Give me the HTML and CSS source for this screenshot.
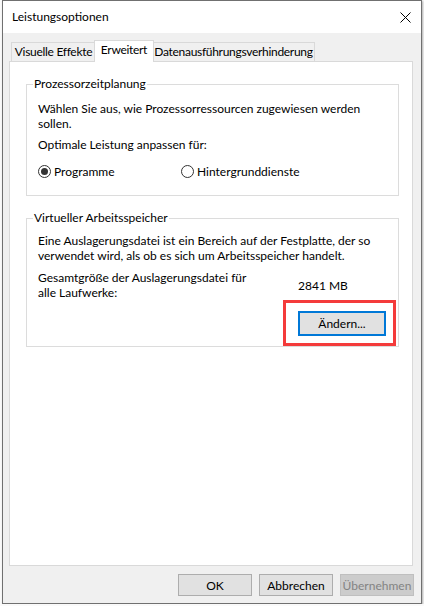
FILE: index.html
```html
<!DOCTYPE html>
<html lang="de">
<head>
  <meta charset="UTF-8">
  <meta name="viewport" content="width=device-width, initial-scale=1.0">
  <title>Leistungsoptionen</title>
  <link rel="stylesheet" href="styles.css">
</head>
<body>
  <div class="window">
    <div class="titlebar">
      <span class="title">Leistungsoptionen</span>
      <span class="close">
        <svg width="11" height="11" viewBox="0 0 11 11">
          <path d="M0.5 0.5 L10.5 10.5 M10.5 0.5 L0.5 10.5" stroke="#000" stroke-width="1" fill="none"/>
        </svg>
      </span>
    </div>
    <div class="client">
      <div class="tabs">
        <div class="tab tab-visual">Visuelle Effekte</div>
        <div class="tab tab-active">Erweitert</div>
        <div class="tab tab-dep">Datenausführungsverhinderung</div>
      </div>
      <div class="panel">
        <fieldset class="group group-cpu">
          <legend>Prozessorzeitplanung</legend>
          <div class="group-body">
            <p class="text">Wählen Sie aus, wie Prozessorressourcen zugewiesen werden sollen.</p>
            <p class="text text-gap">Optimale Leistung anpassen für:</p>
            <div class="radios">
              <span class="radio radio-first"><span class="radio-mark checked"></span>Programme</span>
              <span class="radio"><span class="radio-mark"></span>Hintergrunddienste</span>
            </div>
          </div>
        </fieldset>
        <fieldset class="group group-mem">
          <legend>Virtueller Arbeitsspeicher</legend>
          <div class="group-body">
            <p class="text">Eine Auslagerungsdatei ist ein Bereich auf der Festplatte, der so verwendet wird, als ob es sich um Arbeitsspeicher handelt.</p>
            <div class="size-row">
              <span class="size-label">Gesamtgröße der Auslagerungsdatei für alle Laufwerke:</span>
              <span class="size-value">2841 MB</span>
            </div>
            <div class="change-row">
              <div class="highlight">
                <button class="btn btn-focus">Ändern...</button>
              </div>
            </div>
          </div>
        </fieldset>
      </div>
      <div class="footer">
        <button class="btn">OK</button>
        <button class="btn">Abbrechen</button>
        <button class="btn btn-disabled">Übernehmen</button>
      </div>
    </div>
  </div>
</body>
</html>
```

FILE: styles.css
```css
* {
  box-sizing: border-box;
}
body {
  margin: 0;
  background-color: #fafafa;
  font-family: Lato, "Noto Sans", sans-serif;
  font-size: 12px;
  color: #000;
}
.window {
  width: 420px;
  height: 604px;
  margin-left: 2px;
  border: 1px solid #707070;
  box-shadow: 1px 1px 2px rgba(0, 0, 0, 0.3);
  background-color: #f0f0f0;
  display: flex;
  flex-direction: column;
}
.titlebar {
  height: 32px;
  background-color: #fff;
  display: flex;
  align-items: center;
  justify-content: space-between;
  padding: 0 10px 0 9px;
}
.title {
  line-height: 16px;
}
.close {
  display: flex;
  margin-top: 1px;
}
.client {
  flex: 1;
  display: flex;
  flex-direction: column;
  padding: 7px 8px 7px 6px;
}
.tabs {
  display: flex;
  align-items: flex-end;
  height: 21px;
  padding-left: 2px;
}
.tab {
  height: 19px;
  border: 1px solid #d9d9d9;
  border-bottom: 0;
  background-color: #f0f0f0;
  text-align: center;
  line-height: 17px;
  white-space: nowrap;
  letter-spacing: -0.3px;
}
.tab-visual {
  width: 85px;
}
.tab-active {
  width: 60px;
  height: 22px;
  margin: 0 -2px -1px;
  background-color: #fff;
  position: relative;
  z-index: 1;
}
.tab-dep {
  width: 163px;
}
.panel {
  height: 505px;
  flex: none;
  border: 1px solid #d9d9d9;
  background-color: #fff;
  padding: 14px 13px 0 16px;
}
.group {
  margin: 0;
  padding: 0;
  min-width: 0;
  border: 1px solid #dcdcdc;
}
.group legend {
  margin-left: 6px;
  padding: 0 1px;
  line-height: 16px;
}
.group-mem {
  margin-top: 14px;
}
.group-body {
  padding: 7px 11px 0 11px;
}
.group-cpu .group-body {
  padding-top: 9px;
  padding-bottom: 16px;
}
.text {
  margin: 0;
  line-height: 15px;
}
.text-gap {
  margin-top: 6px;
}
.radios {
  display: flex;
  margin-top: 12px;
  line-height: 15px;
}
.radio {
  display: flex;
  align-items: center;
}
.radio-first {
  width: 143px;
}
.radio-mark {
  width: 13px;
  height: 13px;
  border: 1px solid #333;
  border-radius: 50%;
  margin-right: 3px;
  display: flex;
  align-items: center;
  justify-content: center;
}
.radio-mark.checked::after {
  content: "";
  width: 7px;
  height: 7px;
  border-radius: 50%;
  background-color: #333;
}
.size-row {
  display: flex;
  align-items: center;
  margin-top: 7px;
  line-height: 15px;
}
.size-label {
  width: 216px;
}
.size-value {
  padding-left: 44px;
}
.change-row {
  display: flex;
  justify-content: flex-end;
  margin-right: -9px;
}
.highlight {
  border: 3px solid #f43b3b;
  padding: 8px 7px 7px 12px;
}
.btn {
  width: 74px;
  height: 22px;
  padding: 0;
  border: 1px solid #adadad;
  background-color: #e1e1e1;
  font-family: inherit;
  font-size: 12px;
  color: #000;
}
.btn-focus {
  width: 88px;
  height: 25px;
  border: 2px solid #0078d7;
  display: block;
}
.btn-disabled {
  background-color: #cccccc;
  border-color: #bfbfbf;
  color: #838383;
}
.footer {
  display: flex;
  justify-content: flex-end;
  gap: 7px;
  margin-top: 8px;
  margin-right: -1px;
}
```
